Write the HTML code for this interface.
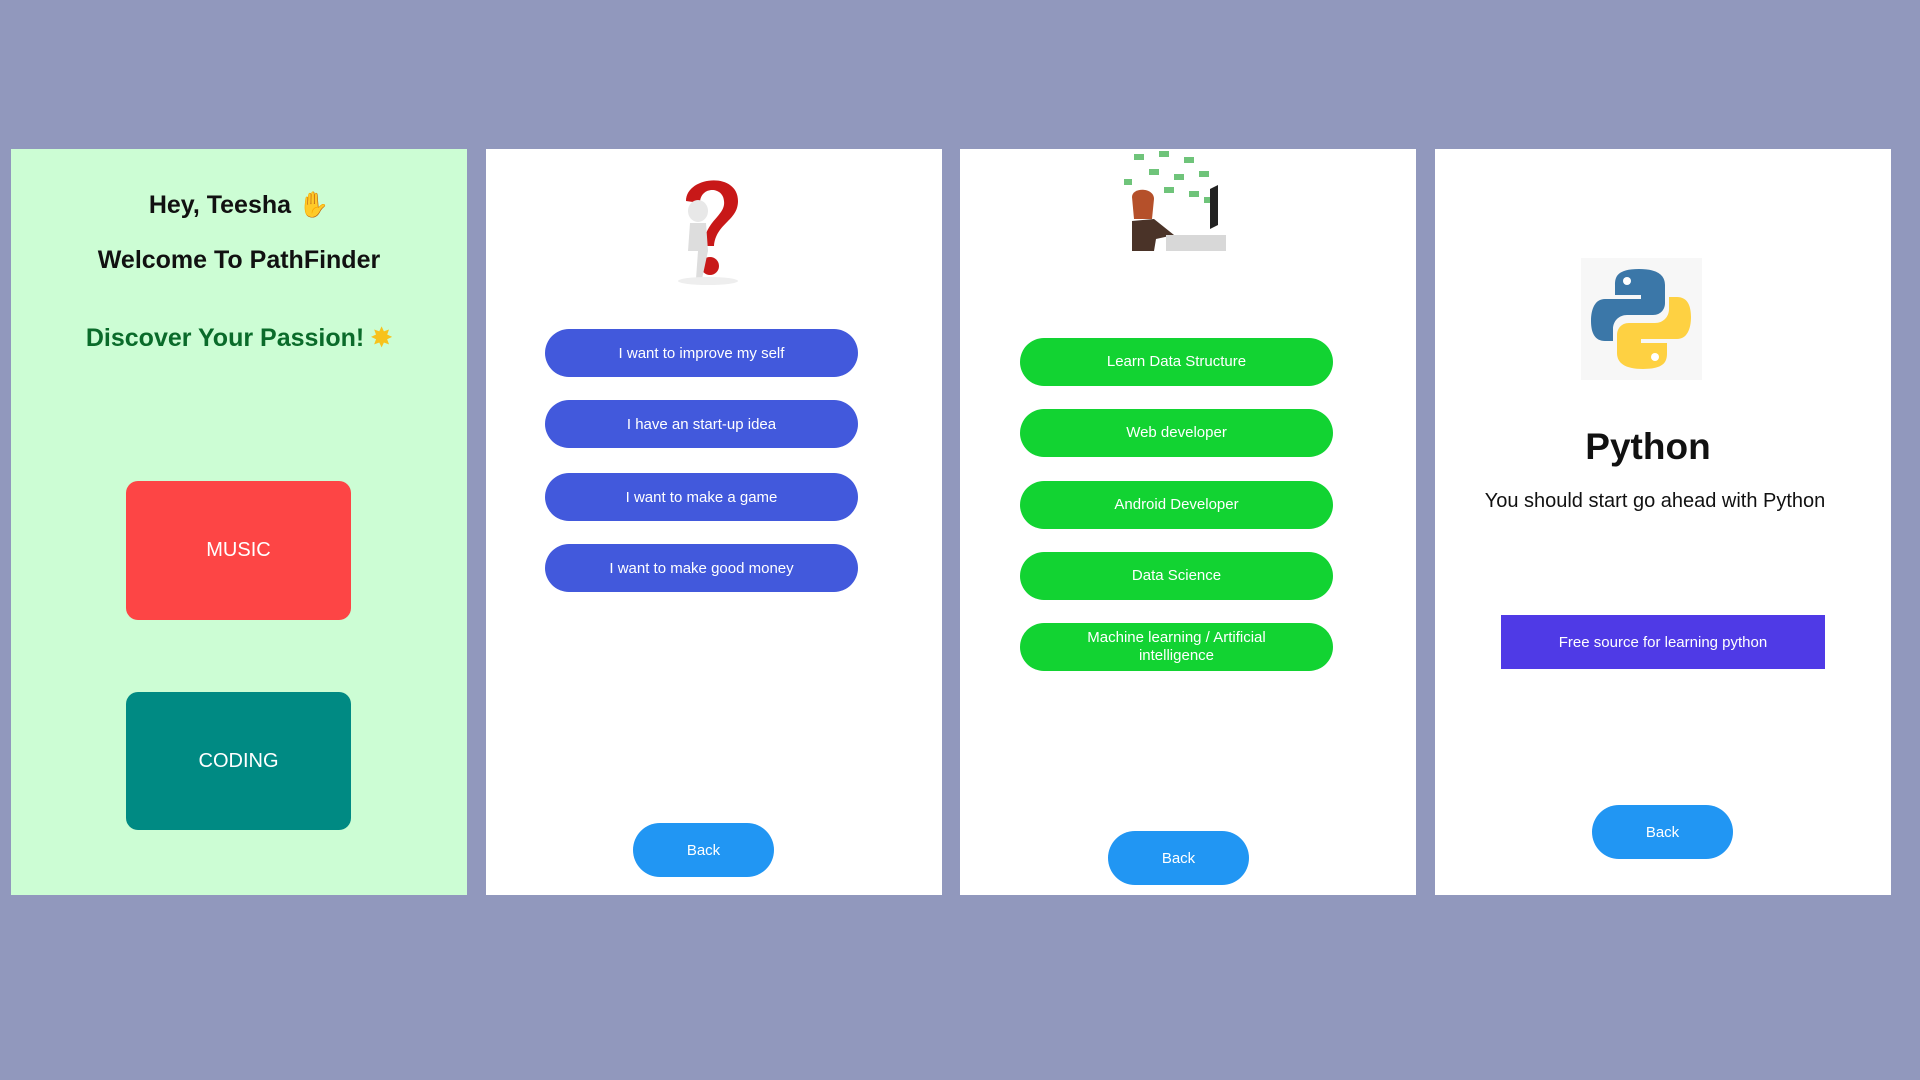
<!DOCTYPE html>
<html><head><meta charset="utf-8"><style>
*{margin:0;padding:0;box-sizing:border-box}
body{width:1920px;height:1080px;background:#9198bd;position:relative;overflow:hidden;font-family:"Liberation Sans",sans-serif}
.p{position:absolute;top:149px;height:746px;width:456px;background:#fff}
.a{position:absolute;display:flex;align-items:center;justify-content:center;text-align:center;color:#fff}
.t{position:absolute;text-align:center;left:0;width:100%}
.pill{border-radius:24px;height:48px;font-size:15px}
.b{background:#4259dc;left:59px;width:313px}
.g{background:#12d332;left:60px;width:313px;line-height:18px}
.back{background:#2196f3;border-radius:27px;height:54px;width:141px;font-size:15px}
</style></head><body>
<div class="p" style="left:11px;background:#ccfdd4">
 <div class="t" style="top:42px;font-size:25px;font-weight:bold;color:#111">Hey, Teesha <span style="color:#f5c020">✋</span></div>
 <div class="t" style="top:97px;font-size:25px;font-weight:bold;color:#111">Welcome To PathFinder</div>
 <div class="t" style="top:174px;font-size:25px;font-weight:bold;color:#0a6b2a">Discover Your Passion! <span style="color:#f7c21c">✸</span></div>
 <div class="a" style="left:115px;top:332px;width:225px;height:139px;background:#fd4545;border-radius:12px;font-size:20px">MUSIC</div>
 <div class="a" style="left:115px;top:543px;width:225px;height:138px;background:#008a83;border-radius:12px;font-size:20px">CODING</div>
</div>
<div class="p" style="left:486px">
 <svg style="position:absolute;left:182px;top:22px" width="80" height="115" viewBox="0 0 80 115">
  <path d="M18 30 C18 5 70 0 70 30 C70 50 48 52 46 75 L36 75 C36 50 58 45 56 30 C55 15 32 15 32 32 Z" fill="#c81818"/>
  <circle cx="42" cy="95" r="9" fill="#c81818"/>
  <ellipse cx="30" cy="40" rx="10" ry="11" fill="#e8e8e8"/>
  <path d="M22 52 L38 52 L40 80 L34 108 L28 108 L30 80 L20 80 Z" fill="#ddd"/>
  <ellipse cx="40" cy="110" rx="30" ry="4" fill="#eee"/>
 </svg>
 <div class="a pill b" style="top:180px">I want to improve my self</div>
 <div class="a pill b" style="top:251px">I have an start-up idea</div>
 <div class="a pill b" style="top:324px">I want to make a game</div>
 <div class="a pill b" style="top:395px">I want to make good money</div>
 <div class="a back" style="left:147px;top:674px">Back</div>
</div>
<div class="p" style="left:960px">
 <svg style="position:absolute;left:154px;top:0" width="120" height="102" viewBox="0 0 120 102">
  <g fill="#6fc47a"><rect x="20" y="5" width="10" height="6"/><rect x="45" y="2" width="10" height="6"/><rect x="70" y="8" width="10" height="6"/><rect x="35" y="20" width="10" height="6"/><rect x="60" y="25" width="10" height="6"/><rect x="85" y="22" width="10" height="6"/><rect x="10" y="30" width="8" height="6"/><rect x="50" y="38" width="10" height="6"/><rect x="75" y="42" width="10" height="6"/><rect x="90" y="48" width="8" height="6"/></g>
  <path d="M18 48 C18 38 40 38 40 50 L38 70 L20 70 Z" fill="#b5502a"/>
  <path d="M18 72 L40 70 L60 86 L42 90 L40 102 L18 102 Z" fill="#4a3328"/>
  <path d="M96 40 L104 36 L104 76 L96 80 Z" fill="#222"/>
  <rect x="52" y="86" width="60" height="16" fill="#d8d8d8"/>
 </svg>
 <div class="a pill g" style="top:189px">Learn Data Structure</div>
 <div class="a pill g" style="top:260px">Web developer</div>
 <div class="a pill g" style="top:332px">Android Developer</div>
 <div class="a pill g" style="top:403px">Data Science</div>
 <div class="a pill g" style="top:474px">Machine learning / Artificial<br>intelligence</div>
 <div class="a back" style="left:148px;top:682px">Back</div>
</div>
<div class="p" style="left:1435px">
 <div style="position:absolute;left:146px;top:109px;width:121px;height:122px;background:#f7f7f7"></div>
 <svg style="position:absolute;left:156px;top:118px" width="100" height="104" viewBox="0 0 100 104">
  <path d="M48 2 C26 2 24 10 24 18 L24 28 L50 28 L50 32 L14 32 C4 32 0 42 0 54 C0 66 4 74 14 74 L22 74 L22 62 C22 54 28 48 36 48 L62 48 C70 48 74 42 74 36 L74 18 C74 8 66 2 48 2 Z" fill="#3b77a8"/>
  <circle cx="36" cy="14" r="4" fill="#fff"/>
  <path d="M52 102 C74 102 76 94 76 86 L76 76 L50 76 L50 72 L86 72 C96 72 100 62 100 50 C100 38 96 30 86 30 L78 30 L78 42 C78 50 72 56 64 56 L38 56 C30 56 26 62 26 68 L26 86 C26 96 34 102 52 102 Z" fill="#fed142"/>
  <circle cx="64" cy="90" r="4" fill="#fff"/>
 </svg>
 <div class="t" style="top:277px;font-size:37px;font-weight:bold;color:#111;left:-15px">Python</div>
 <div class="t" style="top:341px;font-size:20px;color:#111;left:-8px">You should start go ahead with Python</div>
 <div class="a" style="left:66px;top:466px;width:324px;height:54px;background:#4f3ae6;font-size:15px">Free source for learning python</div>
 <div class="a back" style="left:157px;top:656px">Back</div>
</div>
</body></html>
